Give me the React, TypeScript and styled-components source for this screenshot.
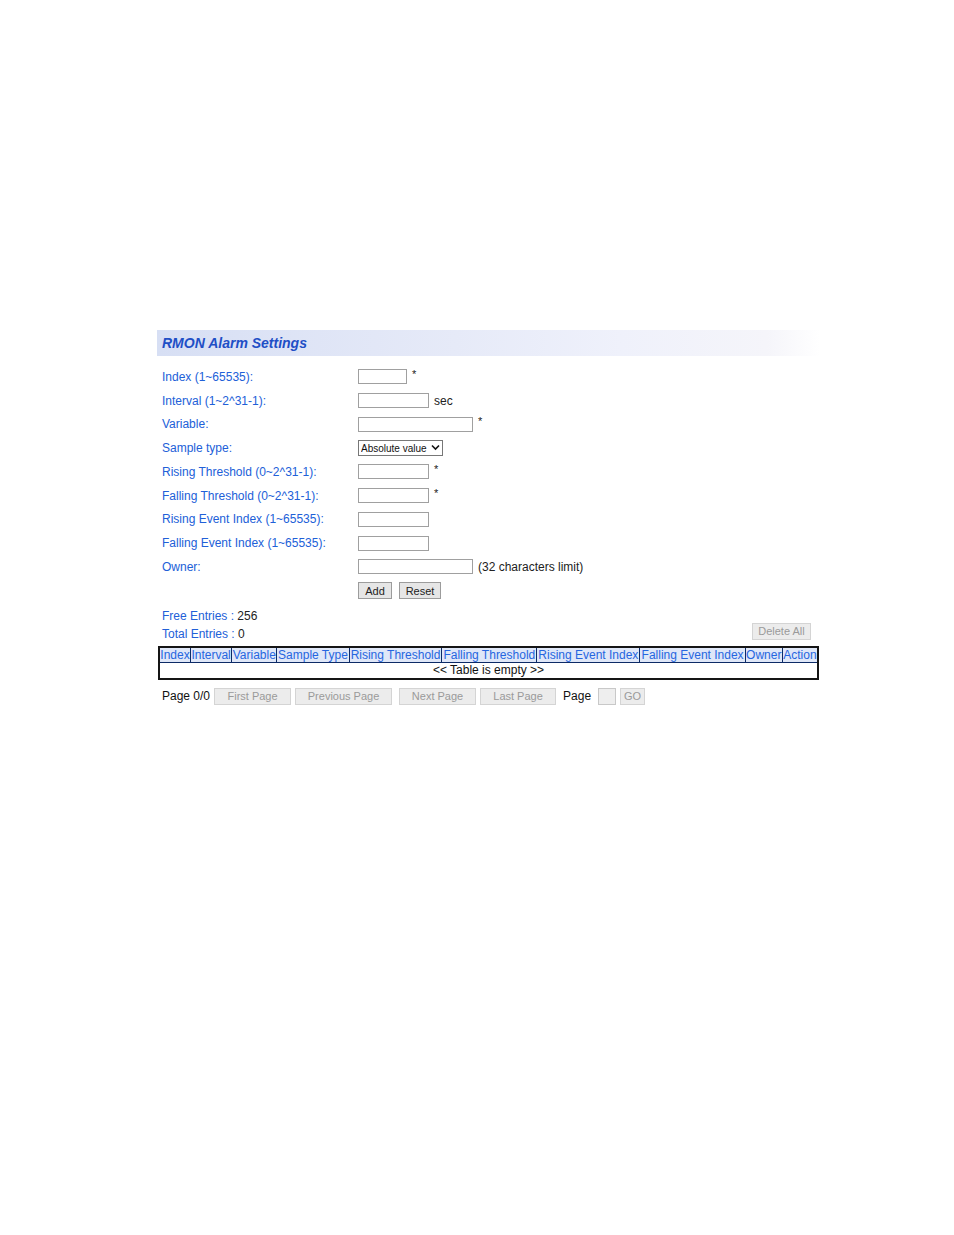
import styled, { createGlobalStyle } from 'styled-components';

const GlobalStyle = createGlobalStyle`
  body {
    margin: 0;
    background: #ffffff;
    font-family: 'Liberation Sans', Arial, sans-serif;
  }
`;

const Page = styled.div`
  width: 663px;
  margin-left: 157px;
  padding-top: 330px;
  padding-bottom: 200px;
  font-size: 12px;
  color: #222;
`;

const TitleBar = styled.div`
  height: 26px;
  display: flex;
  align-items: center;
  padding-left: 5px;
  background: linear-gradient(to right, #d7dff4 0%, #e6eaf8 45%, #eff1fb 70%, #f5f5fa 92%, #ffffff 100%);
`;

const Title = styled.h1`
  margin: 0;
  font-size: 14px;
  font-weight: bold;
  font-style: italic;
  color: #1f4fc6;
`;

const Form = styled.div`
  display: grid;
  grid-template-columns: 196px 1fr;
  grid-auto-rows: 23.75px;
  align-items: center;
  margin-top: 9px;
  padding-left: 5px;
`;

const Label = styled.div`
  color: #2160d8;
`;

const Field = styled.div`
  display: flex;
  align-items: center;
  gap: 5px;
`;

const TextInput = styled.input<{ $w: number }>`
  box-sizing: border-box;
  width: ${(p) => p.$w}px;
  height: 15px;
  padding: 0;
  border: 1px solid #a0a0a0;
  background: #fff;
`;

const SelectBox = styled.div`
  position: relative;
  width: 85px;
  height: 16px;
`;

const Select = styled.select`
  box-sizing: border-box;
  appearance: none;
  width: 100%;
  height: 100%;
  padding: 0 0 0 2px;
  border: 1px solid #777;
  border-radius: 0;
  font-family: 'Liberation Sans', Arial, sans-serif;
  font-size: 10px;
  color: #111;
  background: #fff;
`;

const Chevron = styled.svg`
  position: absolute;
  right: 3px;
  top: 4px;
  width: 9px;
  height: 7px;
  pointer-events: none;
`;

const Mark = styled.span`
  font-size: 11px;
  position: relative;
  top: -3px;
`;

const Note = styled.span`
  color: #222;
`;

const Button = styled.button<{ $w: number; $off?: boolean }>`
  box-sizing: border-box;
  width: ${(p) => p.$w}px;
  height: 17px;
  padding: 0;
  font-family: 'Liberation Sans', Arial, sans-serif;
  font-size: 11px;
  color: ${(p) => (p.$off ? '#9a9a9a' : '#222')};
  background: ${(p) => (p.$off ? '#ececec' : '#e6e6e6')};
  border: 1px solid ${(p) => (p.$off ? '#d4d4d4' : '#9c9c9c')};
  border-radius: 0;
`;

const ButtonRow = styled.div`
  display: flex;
  gap: 7px;
`;

const Summary = styled.div`
  display: flex;
  justify-content: space-between;
  align-items: flex-end;
  padding-left: 5px;
  margin-top: 4px;
`;

const Counts = styled.div`
  display: flex;
  flex-direction: column;
`;

const CountLine = styled.div`
  height: 18px;
  line-height: 18px;
`;

const Key = styled.span`
  color: #2160d8;
`;

const DeleteWrap = styled.div`
  margin: 0 9px 3px 0;
`;

const Table = styled.table`
  width: 661px;
  margin: 3px 0 0 1px;
  border-collapse: collapse;
  border: 2px solid #151515;
`;

const Th = styled.th`
  padding: 0;
  height: 14px;
  font-weight: normal;
  font-size: 12px;
  line-height: 14px;
  color: #2666e0;
  background: #dfe7f8;
  border: 1px solid #0c2a66;
  white-space: nowrap;
  text-align: center;
`;

const Td = styled.td`
  padding: 0;
  height: 15px;
  font-size: 12px;
  text-align: center;
  color: #111;
`;

const Pager = styled.div`
  display: flex;
  align-items: center;
  gap: 4px;
  margin-top: 8px;
  padding-left: 5px;
`;

const PagerText = styled.span<{ $gap?: number }>`
  color: #111;
  font-size: 12px;
  margin: 0 ${(p) => p.$gap ?? 0}px;
`;

const PageInput = styled.input`
  box-sizing: border-box;
  width: 18px;
  height: 17px;
  padding: 0;
  border: 1px solid #c8c8c8;
  background: #eeeeee;
`;

const rows: { label: string; field: JSX.Element }[] = [
  {
    label: 'Index (1~65535):',
    field: (
      <>
        <TextInput $w={49} />
        <Mark>*</Mark>
      </>
    ),
  },
  {
    label: 'Interval (1~2^31-1):',
    field: (
      <>
        <TextInput $w={71} />
        <Note>sec</Note>
      </>
    ),
  },
  {
    label: 'Variable:',
    field: (
      <>
        <TextInput $w={115} />
        <Mark>*</Mark>
      </>
    ),
  },
  {
    label: 'Sample type:',
    field: (
      <SelectBox>
        <Select defaultValue="abs">
          <option value="abs">Absolute value</option>
          <option value="delta">Delta value</option>
        </Select>
        <Chevron viewBox="0 0 9 7">
          <path d="M1 1.5 L4.5 5 L8 1.5" fill="none" stroke="#111" strokeWidth="1.6" />
        </Chevron>
      </SelectBox>
    ),
  },
  {
    label: 'Rising Threshold (0~2^31-1):',
    field: (
      <>
        <TextInput $w={71} />
        <Mark>*</Mark>
      </>
    ),
  },
  {
    label: 'Falling Threshold (0~2^31-1):',
    field: (
      <>
        <TextInput $w={71} />
        <Mark>*</Mark>
      </>
    ),
  },
  { label: 'Rising Event Index (1~65535):', field: <TextInput $w={71} /> },
  { label: 'Falling Event Index (1~65535):', field: <TextInput $w={71} /> },
  {
    label: 'Owner:',
    field: (
      <>
        <TextInput $w={115} />
        <Note>(32 characters limit)</Note>
      </>
    ),
  },
];

const columns = [
  'Index',
  'Interval',
  'Variable',
  'Sample Type',
  'Rising Threshold',
  'Falling Threshold',
  'Rising Event Index',
  'Falling Event Index',
  'Owner',
  'Action',
];

export default function App() {
  return (
    <>
      <GlobalStyle />
      <Page>
        <TitleBar>
          <Title>RMON Alarm Settings</Title>
        </TitleBar>

        <Form>
          {rows.map((r) => (
            <>
              <Label key={r.label}>{r.label}</Label>
              <Field>{r.field}</Field>
            </>
          ))}
          <span />
          <ButtonRow>
            <Button $w={34}>Add</Button>
            <Button $w={42}>Reset</Button>
          </ButtonRow>
        </Form>

        <Summary>
          <Counts>
            <CountLine>
              <Key>Free Entries :</Key> 256
            </CountLine>
            <CountLine>
              <Key>Total Entries :</Key> 0
            </CountLine>
          </Counts>
          <DeleteWrap>
            <Button $w={59} $off>
              Delete All
            </Button>
          </DeleteWrap>
        </Summary>

        <Table>
          <thead>
            <tr>
              {columns.map((c) => (
                <Th key={c}>{c}</Th>
              ))}
            </tr>
          </thead>
          <tbody>
            <tr>
              <Td colSpan={columns.length}>&lt;&lt; Table is empty &gt;&gt;</Td>
            </tr>
          </tbody>
        </Table>

        <Pager>
          <PagerText>Page 0/0</PagerText>
          <Button $w={77} $off>
            First Page
          </Button>
          <Button $w={97} $off>
            Previous Page
          </Button>
          <Button $w={77} $off style={{ marginLeft: 3 }}>
            Next Page
          </Button>
          <Button $w={76} $off>
            Last Page
          </Button>
          <PagerText $gap={3}>Page</PagerText>
          <PageInput disabled />
          <Button $w={25} $off>
            GO
          </Button>
        </Pager>
      </Page>
    </>
  );
}
